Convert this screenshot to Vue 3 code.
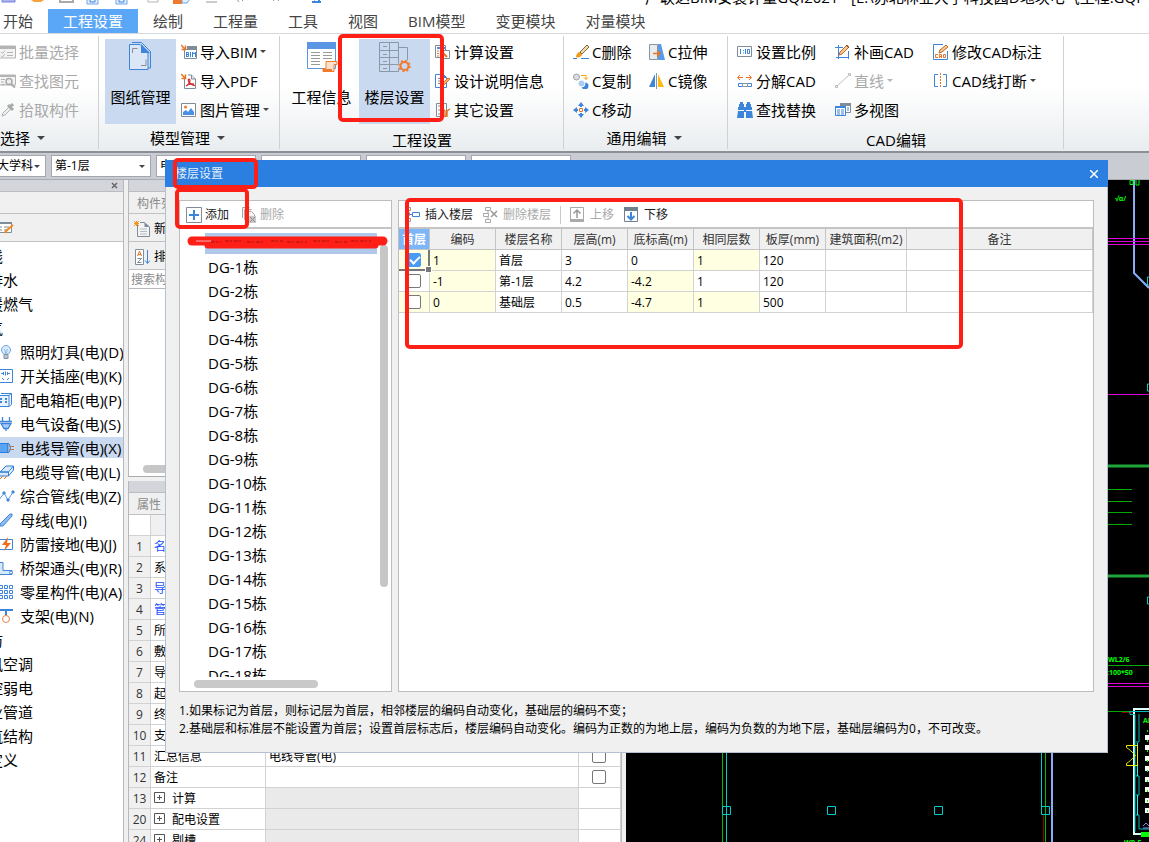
<script setup>
import { ref } from 'vue'

const icons = {
  list: '<path d="M0 2h15.500v12H0" fill="#f4f4f4" stroke="#b4b4b4"/><path d="M0 2h16v3H0z" fill="#b4b4b4"/><path d="M1 8l1.500 1.500L5 6.500M1 11.500l1.500 1.500L5 10M7 8.500h6M7 11.500h6" stroke="#b4b4b4" fill="none"/>',
  find: '<path d="M0 2h15.500v10H0" fill="#f4f4f4" stroke="#b4b4b4"/><path d="M0 2h16v2H0zM1 6h4v1H1zM1 8.500h3v1H1zM1 11h4v1H1z" fill="#b4b4b4"/><circle cx="9" cy="8.500" r="3" fill="#eee" stroke="#aaa" stroke-width="1.500"/><path d="M11 11l4 3.500" stroke="#aaa" stroke-width="2"/>',
  picker: '<path d="M2 14l1-3 6-6 2 2-6 6z" fill="#eee" stroke="#b4b4b4"/><path d="M8 3l5 5M10 5l3-3" stroke="#aaa" stroke-width="3"/>',
  bim: '<path d="M3.500 5.500h12v9h-12z" fill="#fff" stroke="#7f8c99"/><path d="M6 2h10v4H6z" fill="#7f8c99"/><path d="M5.500 8v5M5.500 8.500h2v4h-2M5.500 10.500h2M9.500 8v5M11.500 13V8l1.500 2 1.500-2v5" fill="none" stroke="#3d85da"/><path d="M0 1l4 4M4.500 1.500V5.500H.500" stroke="#e87424" stroke-width="1.500" fill="none"/>',
  pdf: '<path d="M3.500 5V15.500h11V6L10.500 2H7" fill="#fff" stroke="#7f8c99"/><path d="M10.500 2v4h4" fill="#dfe4e8" stroke="#7f8c99"/><path d="M5 13c4-2 5-7 3-7s0 6 6 6.500M5 13c2-2 5-2.500 8-2" fill="none" stroke="#d52a2a" stroke-width="1.200"/><path d="M0 1l4 4M4.500 1.500V5.500H.500" stroke="#e87424" stroke-width="1.500" fill="none"/>',
  image: '<path d="M.500 1.500h14v13H.500z" fill="#fff" stroke="#7f8c99"/><circle cx="4.500" cy="5" r="1.500" fill="#f07a2a"/><path d="M2 13V10l3-2 2 2 3-4 3 4v3z" fill="#4a90e2"/>',
  calc: '<path d="M.500 1.500h10v12H.500z" fill="#fff" stroke="#7f8c99"/><path d="M2 3h8v2H2z" fill="#4a90e2"/><path d="M2 7h2M6 7h2M2 9.500h2M2 12h2" stroke="#e87424"/><path d="M7.500 6.500h7v8h-7z" fill="#fff" stroke="#7f8c99"/><path d="M7 8l5 5" stroke="#e87424" stroke-width="2"/>',
  docpen: '<path d="M.500 1.500h8l3 3v10H.500z" fill="#fff" stroke="#3d85da"/><path d="M8 1v4h4z" fill="#3d85da"/><path d="M3 5.500h4M3 8h5M3 10.500h4" stroke="#7f8c99"/><path d="M15 6l-6 6-2 1 1-3 5-5z" fill="#f6b26b" stroke="#e87424"/>',
  wrench: '<path d="M1.500 1.500h10v13h-10z" fill="#fff" stroke="#7f8c99"/><path d="M3 4h2M3 8h2M3 12h2M6 6h2M6 10h2" stroke="#7f8c99"/><path d="M8 7l2 2v5h2V9l3-2" fill="none" stroke="#e87424" stroke-width="1.500"/>',
  brush: '<path d="M0 14.500h4M8 14.500h8" stroke="#3d85da"/><path d="M3 13c0-3 2-5 4-5l2 2c0 3-4 4-6 3z" fill="#f39a1f"/><path d="M7 8l7-7 2 2-7 7z" fill="#f5d9a0" stroke="#7c6a4f"/>',
  copy: '<circle cx="3.500" cy="4" r="3" fill="#ddd" stroke="#9aa3ad"/><circle cx="12" cy="13" r="3.500" fill="#3d85da"/><circle cx="8.500" cy="10.500" r="3.500" fill="#a9cdf5" stroke="#fff"/><path d="M8 2.500h5v4M11 4.500l2 2 2-2" fill="none" stroke="#f6a500"/>',
  move: '<path d="M8 0l3 4H5zM8 16l3-4H5zM0 8l4-3v6zM16 8l-4-3v6z" fill="#3d85da"/><path d="M8 3v2M8 11v2M3 8h2M11 8h2" stroke="#3d85da" stroke-width="2"/><path d="M6.500 6.500h3v3h-3z" fill="#fff" stroke="#e87424"/>',
  stretch: '<path d="M.500 .500h8v15h-8z" fill="#e9ecef" stroke="#8a949e"/><path d="M9 0h3l4 16H9z" fill="#5a9ae8"/><path d="M4 9.500h7M8 6.500l3 3-3 3" fill="none" stroke="#e87424" stroke-width="1.300"/>',
  mirror: '<path d="M6 1v13H0z" fill="#3d85da"/><path d="M9 1v13h6z" fill="#fcb813"/><path d="M7.500 0v16" stroke="#8a949e"/>',
  scale: '<path d="M.500 2.500h14v10H.500z" fill="#fff" stroke="#7f8c99"/><path d="M3.500 5v5M6.500 6v1M6.500 8.500v1M8.500 5v5M10.500 5.500h2v4h-2z" fill="none" stroke="#3d85da"/>',
  split: '<path d="M1 4.500h5M9 4.500h5M3 2L.500 4.500 3 7M12 2l2.500 2.500L12 7" fill="none" stroke="#e87424"/><path d="M1.500 10.500h4v3h-4zM10.500 10.500h4v3h-4z" fill="#fff" stroke="#3d85da"/><path d="M5.500 10.500h5v3h-5z" fill="#fff" stroke="#8a949e"/>',
  binoc: '<path d="M3 0h3v2H3zM10 0h3v2h-3zM2 2h5v3h2V2h5v3h1v3H1V5h1zM1 9h6v7H0zM9 9h6l1 7H9zM7 6h2v4H7z" fill="#3d85da"/>',
  drawcad: '<path d="M3.500 1v14M0 3.500h8M1 13.500h13M13.500 7v8" fill="none" stroke="#3d85da"/><path d="M4 11l1-3 7-7 2 2-7 7z" fill="#f9c98b" stroke="#b8692f"/><path d="M11 1l3 3" stroke="#6b4c3a"/>',
  line: '<path d="M2 13L13 3" stroke="#c0c0c0"/><path d="M.500 12.500h2v2h-2zM13.500 .500h2v2h-2z" fill="#fff" stroke="#b8b8b8"/>',
  views: '<path d="M5.500 1.500h10v9h-10z" fill="#fff" stroke="#7f8c99"/><path d="M5 1h11v3H5z" fill="#7f8c99"/><path d="M.500 4.500h10v9H.500z" fill="#fff" stroke="#3d85da"/><path d="M0 4h11v2H0z" fill="#3d85da"/><path d="M2 8h3M6 8h3M2 10h3M6 10h3M2 12h3M6 12h3M12 6h2M12 8h2" stroke="#3d85da"/>',
  editcad: '<path d="M10 .500H.500v15h14V7" fill="#fff" stroke="#3d85da"/><path d="M5 10.500H2.500v3H5M6.500 14v-3.500h2V14M6.500 12.500h2M10.500 10.500h2v3h-2z" fill="none" stroke="#e87424"/><path d="M6 9l1-3 6-5 2 2-6 5z" fill="#f9c98b" stroke="#b8692f"/>',
  breakline: '<path d="M5 1.500H1.500v12H5M10 1.500h3.500v12H10" fill="none" stroke="#3d85da"/><path d="M7.500 0v15" stroke="#e87424" stroke-dasharray="2 1"/>',
  bulb: '<circle cx="6" cy="6" r="4.500" fill="#d8eafc" stroke="#6fa8e6"/><path d="M4 10.500h4v4H4z" fill="#b9c6d4" stroke="#8192a3"/><path d="M4.500 5l1.500 5 1.500-5" fill="none" stroke="#8dbbe9"/>',
  switch: '<path d="M-1 1.500h13.500v13H-1" fill="#fff" stroke="#3d85da"/><path d="M3.500 4v3M5.500 3.500v4M7.500 4v3M1 5.500h2M8 5.500h2M2 10l2 2M9 10l-2 2" fill="none" stroke="#3d85da"/>',
  box: '<path d="M-1 3.500h10v11H-1zM9 3.500l2.500-2H1M11.500 1.500v11l-2.500 2" fill="#eaf3fd" stroke="#3d85da"/><path d="M1 6v6M6 6v6" stroke="#3d85da" stroke-width="2" stroke-dasharray="2 1"/>',
  device: '<path d="M2.500 1v4M9.500 1v4M0 5.500h12M1 7.500h10l-3 5H4zM6 12v3" fill="#a9cdf5" stroke="#3d85da" stroke-width="1.300"/>',
  wire: '<path d="M-2 3.500H8v9H-2z" fill="#5aa6f5" stroke="#2f7cd4"/><path d="M8 3.500c3 0 3 9 0 9z" fill="#d7e9fc" stroke="#2f7cd4"/><path d="M9 6.500h5M9 9.500h5" stroke="#b97a56"/>',
  cable: '<path d="M0 8l6-6h7.500l-5 6zM0 8h8.500v4H0M8.500 12l5-6V2" fill="#d7e9fc" stroke="#2f7cd4"/><path d="M0 15l3-3M4 15l3-3" stroke="#e87424"/>',
  pipe: '<path d="M-1 12L4 5l4 7 5-8" fill="none" stroke="#5a9ae8"/><path d="M3 4h2v2H3zM7 11h2v2H7zM12 3h2v2h-2z" fill="#3d85da" stroke="#3d85da"/>',
  bus: '<path d="M0 12L10 2h2v2L3 14H0z" fill="#8fbcf0" stroke="#3d85da"/>',
  lightning: '<path d="M-1 3.500h13.500v10H-1" fill="#fff" stroke="#3d85da"/><path d="M8 1L2 9h4l-2 6 7-8H7z" fill="#ef6c1d"/>',
  tray: '<path d="M-1 2.500h4v8H12v4H-1" fill="#d7e9fc" stroke="#3d85da"/><circle cx="11" cy="12.500" r="1.500" fill="#fff" stroke="#3d85da"/>',
  grid: '<path d="M-.500 1.500h3v3h-3zM4.500 1.500h3v3h-3zM9.500 1.500h3v3h-3zM-.500 6.500h3v3h-3zM4.500 6.500h3v3h-3zM9.500 6.500h3v3h-3zM-.500 11.500h3v3h-3zM4.500 11.500h3v3h-3zM9.500 11.500h3v3h-3z" fill="#fff" stroke="#3d85da"/>',
  hanger: '<path d="M-1 2h14M6 2v6" stroke="#3d85da" stroke-width="2"/><circle cx="6" cy="11" r="3.500" fill="#fff" stroke="#e8834a"/>',
  edit: '<path d="M-1 2.500h12.500v10H-1" fill="#fff" stroke="#7f8c99"/><path d="M-1 2h13v2H-1z" fill="#7f8c99"/><path d="M0 7h2M4 7h5M0 10h2M4 10h4" stroke="#7f8c99"/><path d="M5 13l1-2 7-6" stroke="#f08c1e" stroke-width="2"/>',
  newdoc: '<path d="M3.500 4v11.500h12V6L10.500 1.500H6" fill="#f3f3f3" stroke="#7f8c99"/><path d="M10.500 1.500V6h5z" fill="#7f8c99"/><path d="M6 8h7M6 10.500h7M6 13h7" stroke="#b5bcc3"/><path d="M0 0l5 5M5 0L0 5M2.500 0v5M0 2.500h5" stroke="#f3951c"/>',
  sort: '<path d="M1.500 .500h8v15h-8z" fill="#fff" stroke="#7f8c99"/><path d="M3.500 7l2-5 2 5M4 5.500h3" fill="none" stroke="#e87424"/><path d="M3.500 9.500h4l-4 4h4" fill="none" stroke="#7f8c99"/><path d="M13.500 1v13M11 11.500l2.500 3 2.500-3" fill="none" stroke="#3d85da"/>',
  plus: '<path d="M.500 .500h15v15H.500z" fill="#fff" stroke="#7f8c99"/><path d="M8 3v10M3 8h10" stroke="#3d85da" stroke-width="2"/>',
  del: '<path d="M1.500 11V.500h7M3.500 13V2.500h7M5.500 15.500v-11h5l3 3v8z" fill="#f4f4f4" stroke="#a8a8a8"/><path d="M8 9h7v7H8z" fill="#c9c9c9"/><path d="M9 10l5 5M14 10l-5 5" stroke="#8a8a8a"/>',
  insert: '<path d="M1.500 .500h4v3h-4zM.500 5.500h4v3h-4zM1.500 11.500h4v3h-4zM5 2h1M5 13h1" fill="#fff" stroke="#999"/><path d="M4 7.500h3M7.500 5.500h7v4h-7z" fill="#fff" stroke="#3d85da"/>',
  remove: '<path d="M2.500 .500h5v3h-5zM.500 6.500h5v3h-5zM2.500 12.500h5v3h-5zM5 4v3M5 9v3" fill="#fff" stroke="#aaa"/><path d="M8 4l6 6M14 4l-6 6" stroke="#999" stroke-width="1.500"/>',
  up: '<path d="M.500 .500h13v14H.500z" fill="#fff" stroke="#aaa"/><path d="M0 12h14v3H0z" fill="#aaa"/><path d="M7 11V3M3.500 6.500L7 3l3.500 3.500" fill="none" stroke="#999" stroke-width="1.500"/>',
  down: '<path d="M.500 .500h13v14H.500z" fill="#fff" stroke="#71808e"/><path d="M0 0h14v4H0z" fill="#71808e"/><path d="M7 5v7M3.500 9L7 12.500 10.500 9" fill="none" stroke="#3d85da" stroke-width="2"/>',
  sheets: '<path d="M7 1.500h9.500l9 9V27H23" fill="none" stroke="#3d85da"/><path d="M4.500 3.500H15l8 8v17H4.500z" fill="#dbe7f6" stroke="#3d85da"/><path d="M16 3v9h9z" fill="#3d85da"/><path d="M7.500 12V7.500h5M16 24.500h5v-6" fill="none" stroke="#8a8f94"/>',
  info: '<path d="M1.500 2.500h28v25h-28z" fill="#fff" stroke="#5a96e4"/><path d="M1 1h29v7H1z" fill="#5a96e4"/><path d="M5 11.500h9M5 14.500h9M5 17.500h9M5 20.500h9M5 23.500h9M17 11.500h9M17 14.500h9M17 17.500h9" stroke="#999"/><path d="M20 20.500h11v3h-3v7H17v-3h3z" fill="#fbe1cc" stroke="#ef7a2d"/><path d="M17 28h9v3h-9z" fill="#ef7a2d"/>',
  floors: '<path d="M3.500 1.500h19v29h-19zM13.500 1.500v29M3.500 9.500h19M3.500 16.500h19M3.500 23.500h19M22.500 6.500h9v15M7 5.500h4M7 13.500h4M7 20.500h4M7 27.500h4" transform="translate(-3 0)" fill="none" stroke="#8a98a8"/><circle cx="25.500" cy="25" r="6.500" fill="#c9d9ef"/><circle cx="25.500" cy="25" r="4" fill="none" stroke="#ef7a2d" stroke-width="2"/><circle cx="25.500" cy="25" r="5.500" fill="none" stroke="#ef7a2d" stroke-width="1.500" stroke-dasharray="2 2.300"/>'
}

const tabs = ['开始', '工程设置', '绘制', '工程量', '工具', '视图', 'BIM模型', '变更模块', '对量模块']
const activeTab = ref('工程设置')

const groups = [
  { id: 'pick', label: '选择', arrow: true, big: [], cols: [[
    { t: '批量选择', i: 'list', off: true }, { t: '查找图元', i: 'find', off: true }, { t: '拾取构件', i: 'picker', off: true }]] },
  { id: 'model', label: '模型管理', arrow: true, big: [{ t: '图纸管理', i: 'sheets', on: true }], cols: [[
    { t: '导入BIM', i: 'bim', arrow: true }, { t: '导入PDF', i: 'pdf' }, { t: '图片管理', i: 'image', arrow: true }]] },
  { id: 'project', label: '工程设置', big: [{ t: '工程信息', i: 'info' }, { t: '楼层设置', i: 'floors', on: true }], cols: [[
    { t: '计算设置', i: 'calc' }, { t: '设计说明信息', i: 'docpen' }, { t: '其它设置', i: 'wrench' }]] },
  { id: 'common', label: '通用编辑', arrow: true, big: [], cols: [[
    { t: 'C删除', i: 'brush' }, { t: 'C复制', i: 'copy' }, { t: 'C移动', i: 'move' }],
  [{ t: 'C拉伸', i: 'stretch' }, { t: 'C镜像', i: 'mirror' }]] },
  { id: 'cad', label: 'CAD编辑', big: [], cols: [[
    { t: '设置比例', i: 'scale' }, { t: '分解CAD', i: 'split' }, { t: '查找替换', i: 'binoc' }],
  [{ t: '补画CAD', i: 'drawcad' }, { t: '直线', i: 'line', off: true, arrow: true }, { t: '多视图', i: 'views' }],
  [{ t: '修改CAD标注', i: 'editcad' }, { t: 'CAD线打断', i: 'breakline', arrow: true }]] }
]

const combos = ['大学科', '第-1层', '电气', '', '', '']

const nav = [
  { t: '轴线' }, { t: '给排水' }, { t: '采暖燃气' }, { t: '电气' },
  { t: '照明灯具(电)(D)', i: 'bulb' }, { t: '开关插座(电)(K)', i: 'switch' },
  { t: '配电箱柜(电)(P)', i: 'box' }, { t: '电气设备(电)(S)', i: 'device' },
  { t: '电线导管(电)(X)', i: 'wire', on: true }, { t: '电缆导管(电)(L)', i: 'cable' },
  { t: '综合管线(电)(Z)', i: 'pipe' }, { t: '母线(电)(I)', i: 'bus' },
  { t: '防雷接地(电)(J)', i: 'lightning' }, { t: '桥架通头(电)(R)', i: 'tray' },
  { t: '零星构件(电)(A)', i: 'grid' }, { t: '支架(电)(N)', i: 'hanger' },
  { t: '消防' }, { t: '通风空调' }, { t: '智控弱电' }, { t: '工业管道' }, { t: '建筑结构' }, { t: '自定义' }
]

const props = [
  { n: 1, t: '名称', key: true }, { n: 2, t: '系统类型' }, { n: 3, t: '导管材质', key: true },
  { n: 4, t: '管径(mm)', key: true }, { n: 5, t: '所在位置' }, { n: 6, t: '敷设方式' },
  { n: 7, t: '导线规格' }, { n: 8, t: '起点标高(m)' }, { n: 9, t: '终点标高(m)' },
  { n: 10, t: '支架间距' }, { n: 11, t: '汇总信息', v: '电线导管(电)', c: true },
  { n: 12, t: '备注', c: true }, { n: 13, t: '计算', g: true },
  { n: 20, t: '配电设置', g: true }, { n: 24, t: '剔槽', g: true }
]

const buildings = Array.from({ length: 18 }, (_, k) => `DG-${k + 1}栋`)
const heads = ['首层', '编码', '楼层名称', '层高(m)', '底标高(m)', '相同层数', '板厚(mm)', '建筑面积(m2)', '备注']
const floors = ref([
  { first: true, cells: ['1', '首层', '3', '0', '1', '120', '', ''], y: [0, 4] },
  { first: false, cells: ['-1', '第-1层', '4.2', '-4.2', '1', '120', '', ''], y: [0, 3] },
  { first: false, cells: ['0', '基础层', '0.5', '-4.7', '1', '500', '', ''], y: [0, 3, 4] }
])
const joints = [722, 827, 934, 1041]
const lamps = [735, 745, 756, 766, 777, 787, 798, 808]
</script>

<template>
  <div class="app">
    <header class="titlebar">
      <svg class="quick" width="340" height="23" fill="none" aria-hidden="true">
        <path d="M2 6h13v9H2z" fill="#a9b4ee" stroke="#7284dc" />
        <path d="M31 6h13v7l-3 2h-7l-3-2z" fill="#f7a23a" />
        <path d="M60 4v11h13V4" stroke="#aaa" stroke-width="2" />
        <path d="M87 3h11v14H87zM116 3h11v14h-11z" fill="#e4f0fd" stroke="#6ea5e8" stroke-width="1" />
        <path d="M90 11h5v4h-5zM119 11h5v4h-5z" stroke="#3d85da" />
        <path d="M148 4v11h10V4" stroke="#b5b5b5" />
        <path d="M173 4h9v13h-9z" fill="#f07a2a" /><path d="M182 4h8v8l-3 4h-5z" fill="#e4f0fd" stroke="#6ea5e8" />
        <path d="M206 15h11M236 11l3 4M245 11l-3 3M270 10l4 4M281 10l-3 4" stroke="#999" />
        <path d="M312 15h9M319 10v5M314 13l3-3" stroke="#3d85da" stroke-width="2" />
      </svg>
      <h1>广联达BIM安装计量GQI2021 - [E:\苏北林业大学科技园D地块电气工程.GQI</h1>
    </header>

    <nav class="tabs">
      <button v-for="t in tabs" :key="t" :class="{ active: t === activeTab }" @click="activeTab = t">{{ t }}</button>
    </nav>

    <section class="ribbon">
      <div v-for="g in groups" :key="g.id" class="group" :class="g.id">
        <div class="tools">
          <button v-for="b in g.big" :key="b.t" class="big" :class="{ on: b.on }">
            <svg width="32" height="32" v-html="icons[b.i]"></svg>
            <span>{{ b.t }}</span>
          </button>
          <div v-for="(col, k) in g.cols" :key="k" class="col">
            <button v-for="b in col" :key="b.t" class="tool" :disabled="b.off">
              <svg width="16" height="16" v-html="icons[b.i]"></svg>
              <span>{{ b.t }}</span><i v-if="b.arrow" class="caret small"></i>
            </button>
          </div>
        </div>
        <div class="caption" :class="{ plain: !g.arrow }">{{ g.label }}<i v-if="g.arrow" class="caret"></i></div>
      </div>
    </section>

    <div class="combos">
      <span v-for="(c, k) in combos" :key="k" class="combo">
        <select :aria-label="'选择' + (k + 1)"><option>{{ c }}</option></select><i class="caret small"></i>
      </span>
    </div>

    <main class="workspace">
      <aside class="modules">
        <div class="strip"><button aria-label="关闭面板"><svg width="7" height="7"><path d="M1 1l5 5M6 1L1 6" stroke="#666" stroke-width="1.500" /></svg></button></div>
        <div class="bar"></div>
        <div class="bar tall"><svg width="16" height="16" v-html="icons.edit"></svg></div>
        <ul>
          <li v-for="n in nav" :key="n.t" :class="{ on: n.on, root: !n.i }">
            <svg v-if="n.i" width="16" height="16" v-html="icons[n.i]"></svg><span>{{ n.t }}</span>
          </li>
        </ul>
      </aside>

      <div class="middle">
        <section class="parts">
          <div class="strip"></div>
          <div class="bar title">构件列表</div>
          <div class="bar tall"><button><svg width="16" height="16" v-html="icons.newdoc"></svg>新建</button></div>
          <div class="bar tall"><button><svg width="16" height="16" v-html="icons.sort"></svg>排序</button></div>
          <input type="text" placeholder="搜索构件..." aria-label="搜索构件">
          <div class="empty"><div class="thumb"></div></div>
        </section>
        <section class="props">
          <div class="strip"></div>
          <div class="bar title">属性</div>
          <table>
            <colgroup><col class="c-num"><col class="c-name"><col><col class="c-check"></colgroup>
            <thead><tr><th></th><th></th><th></th><th></th></tr></thead>
            <tbody>
              <tr v-for="p in props" :key="p.n" :class="{ section: p.g }">
                <th>{{ p.n }}</th>
                <td :class="{ key: p.key }"><svg v-if="p.g" class="expand" width="11" height="11"><path d="M.5.5h10v10H.5zM3 5.500h5M5.500 3v5" fill="none" stroke="#555" /></svg>{{ p.t }}</td>
                <td class="val">{{ p.v }}</td>
                <td class="chk"><input v-if="p.c" type="checkbox" :aria-label="p.t"></td>
              </tr>
            </tbody>
          </table>
        </section>
      </div>

      <svg class="drawing" fill="none">
        <g transform="translate(-626 -180)">
          <path d="M1134 180V273L1149 288" stroke="#86adf5" stroke-width="2" />
          <path d="M1130 180.500h3v4h-3zM1136 180v5h3v-5" stroke="#0f0" />
          <path d="M1108 238.500h41M1108 241.500h41M1108 244.500h41M1108 394.500h41M1108 683.500h41M1108 686.500h41" stroke="#d0d" />
          <path d="M1147.500 277h3v8h-3zM1147.500 384h3v7h-3zM1147.500 597h3v7h-3z" stroke="#0cc" />
          <path d="M1108 489.500h24M1108 501.500h24M1108 512.500h24M1108 524.500h24M1108 665.500h41" stroke="#0a0" />
          <path d="M1108 466h41M1108 576h41" stroke="#1fa63a" stroke-width="3" />
          <path d="M1108 711.500h26" stroke="#0a0" /><path d="M1122 712.500h12" stroke="#800" />
          <g class="cad">
            <text x="1115" y="201">√α/</text>
            <text x="1108" y="662">WL2/6</text>
            <text x="1107" y="675">:100*50</text>
            <text x="1143" y="723">AL</text>
            <text x="1124" y="845">WP-5</text>
          </g>
          <path d="M722.500 753V842M1045.500 753V842" stroke="#0b0" />
          <path d="M726.500 753V842M1041.500 753V810" stroke="#0cc" />
          <path d="M1043.500 815V842" stroke="#800" />
          <path d="M1052 753V842" stroke="#86adf5" stroke-width="2" />
          <path v-for="x in joints" :key="x" :d="`M${x + 0.5} 806.500h8v8h-8z`" stroke="#0cc" />
          <path d="M1149 709H1134V834H1149" stroke="#dff" stroke-width="2" />
          <path d="M1149 711.500H1130v3h5v117M1139 714v28h-3M1136 776h3v19h-3M1136 815h3v14h10" stroke="#0bb" />
          <path d="M1137.500 743v33M1137.500 795v20" stroke="#0ff" />
          <path d="M1126.500 745.500h11v20h-11v-2c3-2 5-4 9-8-4-4-6-6-9-8z" stroke="#ee0" />
          <path v-for="y in lamps" :key="y" :d="`M1145 ${y}h4v5h-4z`" fill="#fff" />
          <path d="M1147.500 730V812" stroke="#0f0" stroke-dasharray="2 8" />
          <path d="M1143 828h6M1143 826l3-3 3 3" stroke="#88f" />
          <path d="M1141 832h8v5h-8z" fill="#0f0" />
        </g>
      </svg>
    </main>

    <section class="dialog" role="dialog" aria-labelledby="dlg-title">
      <header>
        <h2 id="dlg-title">楼层设置</h2>
        <button aria-label="关闭"><svg width="8" height="8"><path d="M0 0l8 8M8 0L0 8" stroke="#fff" stroke-width="1.500" /></svg></button>
      </header>
      <div class="panes">
        <div class="pane tree">
          <div class="toolbar">
            <button><svg width="16" height="16" v-html="icons.plus"></svg>添加</button>
            <button disabled><svg width="16" height="16" v-html="icons.del"></svg>删除</button>
          </div>
          <div class="scroller">
            <ul>
              <li class="on"></li>
              <li v-for="b in buildings" :key="b">{{ b }}</li>
            </ul>
            <div class="vbar"></div>
          </div>
          <div class="hbar"></div>
        </div>
        <div class="pane floors">
          <div class="toolbar">
            <button><svg width="16" height="16" v-html="icons.insert"></svg>插入楼层</button>
            <button disabled><svg width="16" height="16" v-html="icons.remove"></svg>删除楼层</button>
            <hr>
            <button disabled><svg width="16" height="16" v-html="icons.up"></svg>上移</button>
            <button><svg width="16" height="16" v-html="icons.down"></svg>下移</button>
          </div>
          <table>
            <colgroup><col class="w-first"><col v-for="k in 6" :key="k" class="w-std"><col class="w-area"><col></colgroup>
            <thead><tr><th v-for="(h, k) in heads" :key="h" :class="{ on: k === 0 }">{{ h }}</th></tr></thead>
            <tbody>
              <tr v-for="(f, r) in floors" :key="r">
                <td class="mark" :class="{ current: r === 0, y: r !== 1 }"><input v-model="f.first" type="checkbox" :aria-label="f.cells[1]"></td>
                <td v-for="(c, k) in f.cells" :key="k" :class="{ y: f.y.includes(k) }">{{ c }}</td>
              </tr>
            </tbody>
          </table>
        </div>
      </div>
      <div class="notes">
        <p>1.如果标记为首层，则标记层为首层，相邻楼层的编码自动变化，基础层的编码不变；</p>
        <p>2.基础层和标准层不能设置为首层；设置首层标志后，楼层编码自动变化。编码为正数的为地上层，编码为负数的为地下层，基础层编码为0，不可改变。</p>
      </div>
    </section>

    <div class="ring ring-ribbon"></div>
    <div class="ring ring-title"></div>
    <div class="ring ring-add"></div>
    <div class="ring ring-table"></div>
    <svg class="strike" width="204" height="20" fill="none">
      <path d="M5 8H196" stroke="#fe2016" stroke-width="9" stroke-linecap="round" />
      <path d="M21 12H188" stroke="#fe2016" stroke-width="7" stroke-linecap="round" />
      <path d="M9 8H24" stroke="#f66" stroke-width="2" />
      <path d="M24 9h10M38 8h16M60 9h18M84 8h12M100 9h20M126 8h16M148 9h12M164 8h20" stroke="#a3140e" stroke-dasharray="4 1 2 2" />
    </svg>
  </div>
</template>

<style>
body { background: #000; overflow: hidden; }
</style>

<style scoped>
* { box-sizing: border-box; margin: 0; padding: 0; }
.app {
  position: relative; display: flex; flex-direction: column; height: 100vh; overflow: hidden;
  background: #fff; color: #000; font: 12px/20px "Open Sans", "Noto Sans CJK SC", sans-serif;
}
button { border: 0; background: none; font: inherit; color: inherit; display: flex; align-items: center; white-space: nowrap; }
button:disabled { color: #a9a9a9; }
svg { flex: none; display: block; }
ul { list-style: none; }
.caret { flex: none; border: 4px solid transparent; border-top-color: #444; border-bottom: 0; }
.caret.small { border-width: 3px; border-bottom: 0; }
button:disabled .caret { border-top-color: #b5b5b5; }

.titlebar { display: flex; height: 22px; margin-top: -13px; overflow: hidden; flex: none; }
.quick { width: 645px; }
.titlebar h1 { font-size: 15px; font-weight: 400; line-height: 20px; white-space: nowrap; }

.tabs { display: flex; flex: none; height: 25px; margin-left: -12px; border-bottom: 1px solid #d5d8dc; font-size: 15px; color: #444; }
.tabs button { padding: 0 15px; }
.tabs .active { background: #5aa7f7; color: #fff; }

.ribbon { display: flex; flex: none; height: 119px; background: linear-gradient(#fff 45%, #e9edef); border-bottom: 2px solid #8c9096; font-size: 15px; }
.group { display: flex; flex-direction: column; padding-top: 3px; position: relative; }
.group::after { content: ""; position: absolute; right: 0; top: 2px; bottom: 2px; width: 1px; background: #cfd2d5; }
.pick { width: 99px; } .model { width: 181px; } .project { width: 284px; } .common { width: 164px; } .cad { width: 336px; }
.tools { display: flex; height: 88px; }
.model .tools, .project .tools { padding-left: 6px; }
.common .tools, .cad .tools { padding-left: 9px; }
.big { flex-direction: column; width: 71px; height: 85px; margin: 2px 2px 0 0; padding-top: 2px; gap: 14px; }
.big.on { background: #c9d9ef; }
.col { display: flex; flex-direction: column; }
.big + .col { margin-left: 3px; }
.common .col { width: 76px; }
.cad .col { width: 98px; }
.tool { height: 29px; gap: 3px; }
.caption { display: flex; height: 26px; align-items: center; justify-content: center; gap: 7px; padding-right: 4px; }
.caption.plain { padding: 4px 0 0; }
.pick .caption { justify-content: flex-start; }

.combos { display: flex; flex: none; gap: 5px; height: 27px; padding: 2px 0; background: #c9cdd3; border-bottom: 1px solid #a9adb3; }
.combo { display: flex; align-items: center; width: 100px; border: 1px solid #a3a7ad; background: #fff; padding-right: 5px; }
.combo:first-child { width: 46px; border-left: 0; }
.combo select { flex: 1; min-width: 0; height: 20px; border: 0; background: none; appearance: none; font: inherit; color: inherit; padding-left: 3px; }
.combo:first-child select { padding-left: 0; text-indent: -3px; }

.workspace { display: flex; flex: 1; min-height: 0; background: #f0f0f0; }
.strip { flex: none; display: flex; justify-content: flex-end; height: 12px; padding: 0 5px; background: #d3d5db; border-bottom: 1px solid #b9bcc3; }
.bar { flex: none; display: flex; align-items: center; height: 22px; border-bottom: 1px solid #c0c2c6; background: #f0f0f0; }
.bar.tall { height: 28px; }
.bar.title { padding: 2px 0 0 8px; color: #8a8a8a; }
.modules { display: flex; flex-direction: column; width: 124px; flex: none; border-right: 1px solid #b5b8bd; background: #fff; overflow: hidden; }
.modules ul { display: flex; flex-direction: column; gap: 3px; padding-top: 3px; font-size: 15px; }
.modules li { display: flex; align-items: center; gap: 4px; height: 21px; white-space: nowrap; }
.modules li.on { background: #c9d9ef; }
.modules li.root { margin-left: -27px; }

.middle { display: flex; flex-direction: column; width: 494px; flex: none; margin: 0 4px; border-right: 1px solid #b5b8bd; }
.parts, .props { display: flex; flex-direction: column; border-left: 1px solid #b5b8bd; }
.parts { height: 297px; flex: none; border-bottom: 1px solid #a8abb0; margin-bottom: 4px; }
.parts button { gap: 4px; padding: 2px 0 0 5px; }
.parts input { height: 19px; border: 0; border-bottom: 1px solid #b5b8bd; padding: 2px 0 0 2px; font: inherit; }
.parts input::placeholder { color: #8a8a8a; opacity: 1; }
.empty { flex: 1; display: flex; align-items: flex-end; background: #fff; padding: 0 14px 3px; }
.thumb { width: 200px; height: 8px; border-radius: 4px; background: #c6c6c6; }
.props { background: #fff; flex: 1; min-height: 0; overflow: hidden; }
table { width: 100%; table-layout: fixed; border-collapse: separate; border-spacing: 0; }
th, td { height: 21px; line-height: 18px; border: 0 solid #d2d2d2; border-width: 0 1px 1px 0; font-weight: 400; text-align: left; padding: 2px 0 0 3px; white-space: nowrap; overflow: hidden; }
.props th { background: #f0f0f0; text-align: center; padding: 2px 0 0; color: #333; }
.props thead th:first-child { background: #fff; }
.c-num { width: 22px; } .c-name { width: 115px; } .c-check { width: 42px; }
.props .key { color: #1c50ff; }
.props .section .val { background: #eaeaea; }
.expand { display: inline-block; margin-right: 7px; }
input[type="checkbox"] { appearance: none; display: block; width: 14px; height: 14px; border: 1px solid #777; border-radius: 2px; background: #fff; }
.props .chk { padding: 0 0 0 13px; }

.drawing { flex: 1; min-width: 0; height: 100%; background: #000; }
.cad text { fill: #0f0; font-size: 7px; font-weight: 700; }

.dialog { position: absolute; left: 165px; right: 41px; top: 160px; bottom: 89px; display: flex; flex-direction: column; background: #f0f0f0; border: 1px solid #b4bfd0; border-top: 0; }
.dialog header { display: flex; justify-content: space-between; align-items: center; height: 27px; flex: none; margin: 0 -1px; padding: 0 10px; background: #2b7fe0; color: #e6eefa; }
.dialog h2 { font-size: 12px; font-weight: 400; }
.panes { display: flex; gap: 6px; flex: 1; min-height: 0; padding: 13px 13px 0; }
.pane { display: flex; flex-direction: column; background: #fff; border: 1px solid #bdbdbd; overflow: hidden; }
.tree { width: 213px; flex: none; }
.floors { flex: 1; min-width: 0; }
.toolbar { display: flex; align-items: center; flex: none; height: 28px; padding-top: 1px; border-bottom: 2px solid #c4c4c4; color: #222; }
.toolbar button { gap: 3px; padding: 0 6px; }
.toolbar hr { width: 1px; height: 18px; border: 0; background: #c8c8c8; margin: 0 4px; }
.floors .toolbar { padding-left: 1px; }
.floors .toolbar button { gap: 4px; padding: 0 5px; }
.scroller { display: flex; flex: 1; min-height: 0; padding: 2px 3px 0 25px; overflow: hidden; }
.scroller ul { flex: 1; font-size: 15px; line-height: 24px; }
.scroller li { height: 24px; padding-left: 3px; }
.scroller .on { height: 21px; margin: 2px 0 1px; background: #b0c8ea; }
.vbar { width: 8px; height: 342px; margin: 14px 0 0 3px; border-radius: 4px; background: #c6c6c6; }
.hbar { flex: none; width: 124px; height: 8px; margin: 3px 0 3px 14px; border-radius: 4px; background: #c9c9c9; }
.w-first { width: 31px; } .w-std { width: 66px; } .w-area { width: 81px; }
.floors th { text-align: center; padding: 2px 0 0; background: #f0f0f0; color: #333; border-color: #c4c4c4; }
.floors th.on { background: #7db6f8; color: #fff; font-weight: 700; }
.floors .y { background: #ffffe1; }
.floors .mark { padding: 0 0 0 8px; }
.floors .current { position: relative; overflow: visible; border-right: 2px solid #777; border-bottom: 2px solid #777; }
.floors .current::after { content: ""; position: absolute; right: -4px; bottom: -4px; width: 5px; height: 5px; border: 1px solid #fff; background: #777; box-sizing: content-box; }
.mark input:checked { background: #4a9bf5; border-color: #4a9bf5; }
.mark input:checked::after { content: ""; display: block; width: 4px; height: 8px; margin: 0 0 0 4px; border: solid #fff; border-width: 0 2px 2px 0; transform: rotate(45deg); }
.notes { flex: none; padding: 10px 13px 14px; line-height: 18px; }
.notes p { white-space: nowrap; }

.ring { position: absolute; border: 4px solid #fe2016; border-radius: 5px; pointer-events: none; }
.ring-ribbon { left: 338px; top: 34px; width: 106px; height: 88px; }
.ring-title { left: 173px; top: 158px; width: 85px; height: 31px; }
.ring-add { left: 175px; top: 188px; width: 74px; height: 41px; }
.ring-table { left: 405px; top: 198px; width: 558px; height: 151px; }
.strike { position: absolute; left: 187px; top: 233px; }
</style>
